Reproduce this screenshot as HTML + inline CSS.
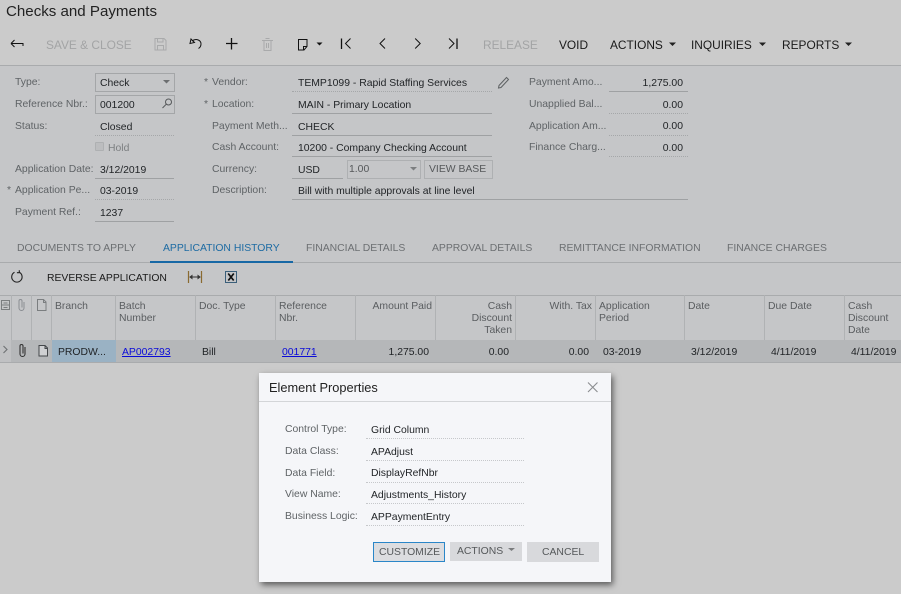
<!DOCTYPE html>
<html><head><meta charset="utf-8">
<style>
html,body{margin:0;padding:0;width:901px;height:594px;overflow:hidden;background:#cbcbcb;font-family:"Liberation Sans",Arial,sans-serif}
.a{position:absolute}
.t{position:absolute;white-space:nowrap;line-height:14px;font-size:10.4px}
.l{color:#5f6366}
.v{color:#1f2225}
.b{position:absolute;white-space:nowrap;line-height:16px;font-size:11.9px;color:#1a1a1a}
.d{color:#a3a4a5}
.tab{position:absolute;white-space:nowrap;line-height:14px;font-size:10.4px;color:#6c6f72;top:242px}
.hr{position:absolute;height:1px;background:#9fa1a3}
.hd{position:absolute;height:0;border-top:1px dotted #a5a7a9}
.vb{position:absolute;width:1px;top:295px;height:45px;background:#b0b2b4}
.h{position:absolute;white-space:nowrap;line-height:12px;font-size:10.4px;color:#5a5d60;top:301px}
.r{text-align:right}
.c{position:absolute;white-space:nowrap;line-height:14px;font-size:10.4px;color:#1f2225;top:346px}
svg{position:absolute;overflow:visible}
</style></head><body>
<div class="a" style="left:0;top:0;width:901px;height:65px;background:#cbcbcb"></div>
<div class="a" style="left:0;top:65px;width:901px;height:1px;background:#a9abad"></div>
<div class="a" style="left:0;top:66px;width:901px;height:274px;background:#c5c6c8"></div>

<div class="a" style="left:6px;top:3px;font-size:15.1px;line-height:18px;color:#222;white-space:nowrap">Checks and Payments</div>

<!-- toolbar -->
<svg style="left:0;top:28px" width="360" height="32" fill="none" stroke-width="1">
<path d="M11 15.500H23V18M11 15.500l3.500-3.500M11 15.500l3.500 3.500" stroke="#111"/>
<path d="M155 10.500h9l2 2v9.500h-11zM157.500 10.500v3.500h5.500v-3.500M157.500 22v-4.500h6v4.500" stroke="#a9aaab"/>
<path d="M190 15.500l1-4.500 3.500 3.500zM192 13c4-3 9-1 9 3 0 2-1 3.500-2.500 4.500" stroke="#111"/>
<path d="M226 15.500h11.500M231.500 10v11.500" stroke="#111" stroke-width="1.300"/>
<path d="M262 12.500h11M264 12.500v10h7v-10M265.500 10.500h4M266.500 15v5M268.500 15v5" stroke="#a9aaab"/>
<path d="M298.500 11.500h8.500v7l-3 3.500h-5.500zM303.500 22v-3.500h3.500" stroke="#111"/>
<path d="M316.500 14.500h6l-3 3z" fill="#111" stroke="none"/>
<path d="M341.500 10.500v10.500" stroke="#111" stroke-width="1.300"/>
<path d="M350.500 10.500l-5 5 5 5" stroke="#111"/>
</svg>
<svg style="left:370px;top:28px" width="100" height="32" fill="none" stroke-width="1">
<path d="M15 10.500l-5 5 5 5M45.200 10.500l5 5-5 5M79 10.500l5 5-5 5" stroke="#111"/>
<path d="M87 10.500v10.500" stroke="#111" stroke-width="1.300"/>
</svg>
<div class="b d" style="left:46px;top:37px">SAVE &amp; CLOSE</div>
<div class="b d" style="left:483px;top:37px">RELEASE</div>
<div class="b" style="left:559px;top:37px">VOID</div>
<div class="b" style="left:610px;top:37px">ACTIONS</div>
<div class="b" style="left:691px;top:37px">INQUIRIES</div>
<div class="b" style="left:782px;top:37px">REPORTS</div>
<svg style="left:0;top:0" width="901" height="60">
<path d="M669 42.500h7l-3.500 3.500zM759 42.500h7l-3.500 3.500zM845 42.500h7l-3.500 3.500z" fill="#222"/>
</svg>

<!-- form col 1 -->
<div class="t l" style="left:15px;top:76px">Type:</div>
<div class="a" style="left:95px;top:73px;width:78px;height:17px;border:1px solid #a4a6a8"></div>
<div class="t v" style="left:100px;top:77px">Check</div>
<svg style="left:160px;top:78px" width="12" height="8"><path d="M3 2h7l-3.500 3.500z" fill="#6c6e70"/></svg>
<div class="t l" style="left:15px;top:98px">Reference Nbr.:</div>
<div class="a" style="left:95px;top:95px;width:78px;height:17px;border:1px solid #a4a6a8"></div>
<div class="t v" style="left:100px;top:99px">001200</div>
<svg style="left:160px;top:96px" width="14" height="14" fill="none" stroke="#55585a" stroke-width="1"><circle cx="8.500" cy="6" r="3"/><path d="M6.300 8.200L2.500 12"/></svg>
<div class="t l" style="left:15px;top:120px">Status:</div>
<div class="t v" style="left:100px;top:121px">Closed</div>
<div class="hd" style="left:95px;top:135px;width:79px"></div>
<div class="a" style="left:95px;top:142px;width:7px;height:7px;border:1px solid #aeb0b2;border-radius:1px;background:#bcbdbf"></div>
<div class="t" style="left:108px;top:142px;color:#7c7f81">Hold</div>
<div class="t l" style="left:15px;top:163px">Application Date:</div>
<div class="t v" style="left:100px;top:164px">3/12/2019</div>
<div class="hr" style="left:95px;top:178px;width:79px"></div>
<div class="t l" style="left:7px;top:184px">*</div>
<div class="t l" style="left:15px;top:184px">Application Pe...</div>
<div class="t v" style="left:100px;top:185px">03-2019</div>
<div class="hd" style="left:95px;top:199px;width:79px"></div>
<div class="t l" style="left:15px;top:206px">Payment Ref.:</div>
<div class="t v" style="left:100px;top:207px">1237</div>
<div class="hr" style="left:95px;top:221px;width:79px"></div>

<!-- form col 2 -->
<div class="t l" style="left:204px;top:76px">*</div>
<div class="t l" style="left:212px;top:76px">Vendor:</div>
<div class="t v" style="left:298px;top:77px">TEMP1099 - Rapid Staffing Services</div>
<div class="hd" style="left:292px;top:91px;width:200px"></div>
<svg style="left:496px;top:75px" width="14" height="14" fill="none" stroke="#5e6163" stroke-width="1"><path d="M3 10.500L10.500 2.500l2 2L5 12.500l-2.500.5z"/></svg>
<div class="t l" style="left:204px;top:98px">*</div>
<div class="t l" style="left:212px;top:98px">Location:</div>
<div class="t v" style="left:298px;top:99px">MAIN - Primary Location</div>
<div class="hr" style="left:292px;top:113px;width:200px"></div>
<div class="t l" style="left:212px;top:120px">Payment Meth...</div>
<div class="t v" style="left:298px;top:121px">CHECK</div>
<div class="hr" style="left:292px;top:135px;width:200px"></div>
<div class="t l" style="left:212px;top:141px">Cash Account:</div>
<div class="t v" style="left:298px;top:142px">10200 - Company Checking Account</div>
<div class="hr" style="left:292px;top:156px;width:200px"></div>
<div class="t l" style="left:212px;top:163px">Currency:</div>
<div class="t v" style="left:298px;top:164px">USD</div>
<div class="hr" style="left:292px;top:178px;width:51px"></div>
<div class="a" style="left:347px;top:160px;width:72px;height:17px;border:1px solid #aeb0b2"></div>
<div class="t" style="left:349px;top:163px;color:#55585a">1.00</div>
<svg style="left:408px;top:165px" width="12" height="8"><path d="M2 2h7l-3.500 3.500z" fill="#7c7e80"/></svg>
<div class="a" style="left:424px;top:160px;width:67px;height:17px;border:1px solid #aeb0b2"></div>
<div class="t" style="left:429px;top:163px;color:#55585a">VIEW BASE</div>
<div class="t l" style="left:212px;top:184px">Description:</div>
<div class="t v" style="left:298px;top:185px">Bill with multiple approvals at line level</div>
<div class="hr" style="left:292px;top:199px;width:396px"></div>

<!-- form col 3 -->
<div class="t l" style="left:529px;top:76px">Payment Amo...</div>
<div class="t v r" style="right:218px;top:77px">1,275.00</div>
<div class="hr" style="left:609px;top:91px;width:79px"></div>
<div class="t l" style="left:529px;top:98px">Unapplied Bal...</div>
<div class="t v r" style="right:218px;top:99px">0.00</div>
<div class="hd" style="left:609px;top:113px;width:79px"></div>
<div class="t l" style="left:529px;top:120px">Application Am...</div>
<div class="t v r" style="right:218px;top:120px">0.00</div>
<div class="hd" style="left:609px;top:135px;width:79px"></div>
<div class="t l" style="left:529px;top:141px">Finance Charg...</div>
<div class="t v r" style="right:218px;top:142px">0.00</div>
<div class="hd" style="left:609px;top:156px;width:79px"></div>

<!-- tabs -->
<div class="tab" style="left:17px">DOCUMENTS TO APPLY</div>
<div class="tab" style="left:163px;color:#1d6ba3">APPLICATION HISTORY</div>
<div class="tab" style="left:306px">FINANCIAL DETAILS</div>
<div class="tab" style="left:432px">APPROVAL DETAILS</div>
<div class="tab" style="left:559px">REMITTANCE INFORMATION</div>
<div class="tab" style="left:727px">FINANCE CHARGES</div>
<div class="a" style="left:0;top:262px;width:901px;height:1px;background:#a9abad"></div>
<div class="a" style="left:150px;top:261px;width:143px;height:2px;background:#1768a5"></div>

<!-- grid toolbar -->
<svg style="left:10px;top:270px" width="14" height="14" fill="none" stroke="#222" stroke-width="1.100"><path d="M4.500 2.300a5.200 5.200 0 1 0 4.800 0M9.300 .3v2.400h-2.400"/></svg>
<div class="t" style="left:47px;top:272px;color:#1a1a1a">REVERSE APPLICATION</div>
<svg style="left:187px;top:270px" width="16" height="14" fill="none"><path d="M1.500 1v12M14.500 1v12" stroke="#8a6a30" stroke-width="1.200"/><path d="M3 7h10M3 7l2-1.500v3zM13 7l-2-1.500v3z" stroke="#333" stroke-width="1"/></svg>
<svg style="left:225px;top:271px" width="12" height="12"><rect x=".5" y=".5" width="11" height="11" fill="#c5c6c8" stroke="#3b5f7a"/><path d="M3.200 2.500l5.500 7M8.800 2.500l-5.500 7" stroke="#111" stroke-width="1.700"/></svg>

<!-- grid -->
<div class="a" style="left:0;top:295px;width:901px;height:1px;background:#a9abad"></div>
<div class="a" style="left:0;top:340px;width:901px;height:22px;background:#b5b7b9"></div>
<div class="a" style="left:0;top:340px;width:11px;height:22px;background:#c0c1c3"></div>
<div class="a" style="left:52px;top:340px;width:64px;height:22px;background:#9ab2c4"></div>
<div class="a" style="left:0;top:362px;width:901px;height:1px;background:#a9abad"></div>
<div class="vb" style="left:11px"></div><div class="vb" style="left:31px"></div><div class="vb" style="left:51px"></div><div class="vb" style="left:115px"></div><div class="vb" style="left:195px"></div><div class="vb" style="left:275px"></div><div class="vb" style="left:355px"></div><div class="vb" style="left:435px"></div><div class="vb" style="left:515px"></div><div class="vb" style="left:595px"></div><div class="vb" style="left:684px"></div><div class="vb" style="left:764px"></div><div class="vb" style="left:844px"></div>

<svg style="left:0;top:296px" width="52" height="66" fill="none">
<path d="M1.500 4.500h8v9h-8zM1.500 9h8M3.500 7h4M3.500 11.500h4" stroke="#7b7e80"/>
<path d="M24 6v6a2.500 2.500 0 0 1-5 0V5a1.500 1.500 0 0 1 3 0v6.500" stroke="#8a8d92"/>
<path d="M37.500 3.500h6l2.500 2.500v8.500h-8.500zM43.500 3.500v3h2.500" stroke="#7b7e80"/>
<path d="M3.500 50l3.500 3.500-3.500 3.500" stroke="#6e7174" stroke-width="1.100"/>
<path d="M25 51v7a2.500 2.500 0 0 1-5 0v-8a1.500 1.500 0 0 1 3 0v7.500" stroke="#333" stroke-width="1.100"/>
<path d="M39.500 49.500h6l2.500 2.500v8h-8.500zM45.500 49.500v3h2.500" stroke="#44474a" fill="#cfd0d2" transform="translate(-.5 0)"/>
</svg>

<div class="h" style="left:55px">Branch</div>
<div class="h" style="left:119px">Batch<br>Number</div>
<div class="h" style="left:199px">Doc. Type</div>
<div class="h" style="left:279px">Reference<br>Nbr.</div>
<div class="h r" style="right:469px">Amount Paid</div>
<div class="h r" style="right:389px">Cash<br>Discount<br>Taken</div>
<div class="h r" style="right:309px">With. Tax</div>
<div class="h" style="left:599px">Application<br>Period</div>
<div class="h" style="left:688px">Date</div>
<div class="h" style="left:768px">Due Date</div>
<div class="h" style="left:848px">Cash<br>Discount<br>Date</div>

<div class="c" style="left:58px">PRODW...</div>
<div class="c" style="left:122px;color:#0b0bd8;text-decoration:underline">AP002793</div>
<div class="c" style="left:202px">Bill</div>
<div class="c" style="left:282px;color:#0b0bd8;text-decoration:underline">001771</div>
<div class="c r" style="right:472px">1,275.00</div>
<div class="c r" style="right:392px">0.00</div>
<div class="c r" style="right:312px">0.00</div>
<div class="c" style="left:603px">03-2019</div>
<div class="c" style="left:691px">3/12/2019</div>
<div class="c" style="left:771px">4/11/2019</div>
<div class="c" style="left:851px">4/11/2019</div>

<!-- modal -->
<div class="a" style="left:259px;top:373px;width:352px;height:209px;background:#f5f6f9;box-shadow:2px 3px 6px rgba(0,0,0,.55)"></div>
<div class="a" style="left:259px;top:401px;width:352px;height:1px;background:#d3d5d8"></div>
<div class="a" style="left:269px;top:380px;font-size:12.800px;line-height:16px;color:#222;white-space:nowrap">Element Properties</div>
<svg style="left:587px;top:382px" width="12" height="11" fill="none" stroke="#8b8d90" stroke-width="1.100"><path d="M1 .5l9.500 9.500M10.500 .5L1 10"/></svg>

<div class="t l" style="left:285px;top:423px">Control Type:</div>
<div class="t v" style="left:371px;top:424px">Grid Column</div>
<div class="hd" style="left:366px;top:438px;width:158px;border-color:#c6c8cb"></div>
<div class="t l" style="left:285px;top:445px">Data Class:</div>
<div class="t v" style="left:371px;top:446px">APAdjust</div>
<div class="hd" style="left:366px;top:460px;width:158px;border-color:#c6c8cb"></div>
<div class="t l" style="left:285px;top:467px">Data Field:</div>
<div class="t v" style="left:371px;top:467px">DisplayRefNbr</div>
<div class="hd" style="left:366px;top:482px;width:158px;border-color:#c6c8cb"></div>
<div class="t l" style="left:285px;top:488px">View Name:</div>
<div class="t v" style="left:371px;top:489px">Adjustments_History</div>
<div class="hd" style="left:366px;top:503px;width:158px;border-color:#c6c8cb"></div>
<div class="t l" style="left:285px;top:510px">Business Logic:</div>
<div class="t v" style="left:371px;top:511px">APPaymentEntry</div>
<div class="hd" style="left:366px;top:525px;width:158px;border-color:#c6c8cb"></div>

<div class="a" style="left:373px;top:542px;width:70px;height:18px;border:1px solid #2a86c8;background:#dcdde0"></div>
<div class="t" style="left:379px;top:546px;color:#55585a">CUSTOMIZE</div>
<div class="a" style="left:450px;top:542px;width:72px;height:19px;background:#d8d9dc"></div>
<div class="t" style="left:457px;top:545px;color:#55585a">ACTIONS</div>
<svg style="left:507px;top:547px" width="10" height="6"><path d="M1 1h7L4.500 4z" fill="#7a7c7e"/></svg>
<div class="a" style="left:527px;top:542px;width:72px;height:20px;background:#d8d9dc"></div>
<div class="t" style="left:542px;top:546px;color:#55585a">CANCEL</div>
</body></html>
